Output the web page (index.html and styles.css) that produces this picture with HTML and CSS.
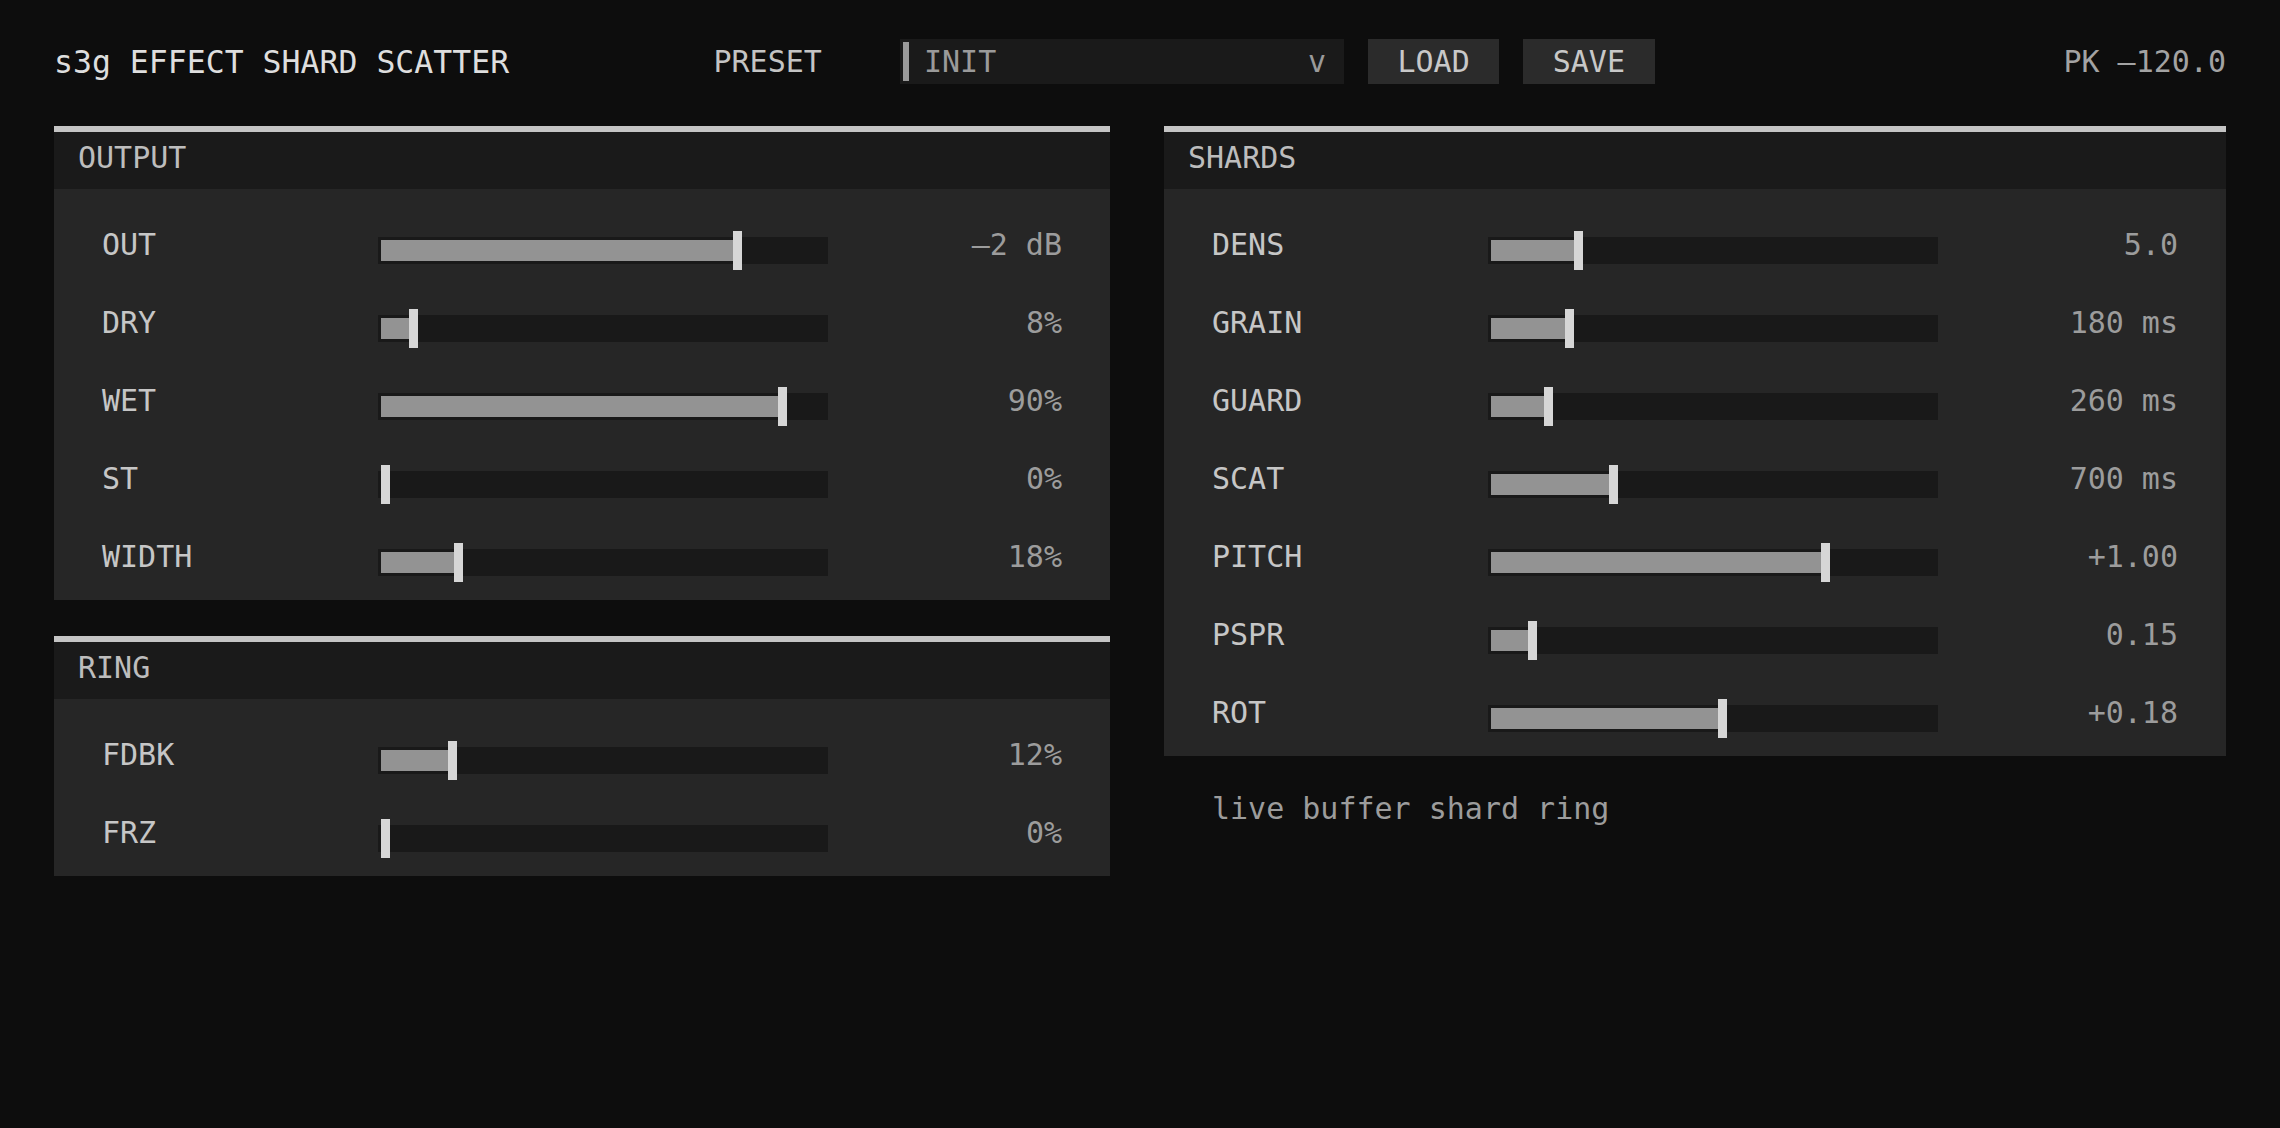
FILE: index.html
```html
<!DOCTYPE html>
<html lang="en">
<head>
<meta charset="utf-8">
<title>s3g EFFECT SHARD SCATTER</title>
<link rel="stylesheet" href="styles.css">
</head>
<body>
<header class="topbar">
  <div class="title">s3g EFFECT SHARD SCATTER</div>
  <div class="preset-label">PRESET</div>
  <div class="select">
    <span class="select-bar"></span>
    <span class="select-text">INIT</span>
    <span class="select-caret">v</span>
  </div>
  <button class="btn">LOAD</button>
  <button class="btn">SAVE</button>
  <div class="peak">PK –120.0</div>
</header>

<main class="columns">
  <div class="col">
    <section class="panel">
      <div class="panel-head">OUTPUT</div>
      <div class="panel-body">
        <div class="row"><span class="label">OUT</span><div class="slider"><div class="track"><div class="fill" style="width:351.7px"><span class="thumb"></span></div></div></div><span class="value">–2 dB</span></div>
        <div class="row"><span class="label">DRY</span><div class="slider"><div class="track"><div class="fill" style="width:28px"><span class="thumb"></span></div></div></div><span class="value">8%</span></div>
        <div class="row"><span class="label">WET</span><div class="slider"><div class="track"><div class="fill" style="width:397px"><span class="thumb"></span></div></div></div><span class="value">90%</span></div>
        <div class="row"><span class="label">ST</span><div class="slider"><div class="track"><div class="fill" style="width:0px"><span class="thumb"></span></div></div></div><span class="value">0%</span></div>
        <div class="row"><span class="label">WIDTH</span><div class="slider"><div class="track"><div class="fill" style="width:73px"><span class="thumb"></span></div></div></div><span class="value">18%</span></div>
      </div>
    </section>
    <section class="panel">
      <div class="panel-head">RING</div>
      <div class="panel-body">
        <div class="row"><span class="label">FDBK</span><div class="slider"><div class="track"><div class="fill" style="width:67px"><span class="thumb"></span></div></div></div><span class="value">12%</span></div>
        <div class="row"><span class="label">FRZ</span><div class="slider"><div class="track"><div class="fill" style="width:0px"><span class="thumb"></span></div></div></div><span class="value">0%</span></div>
      </div>
    </section>
  </div>

  <div class="col">
    <section class="panel">
      <div class="panel-head">SHARDS</div>
      <div class="panel-body">
        <div class="row"><span class="label">DENS</span><div class="slider"><div class="track"><div class="fill" style="width:83px"><span class="thumb"></span></div></div></div><span class="value">5.0</span></div>
        <div class="row"><span class="label">GRAIN</span><div class="slider"><div class="track"><div class="fill" style="width:74px"><span class="thumb"></span></div></div></div><span class="value">180 ms</span></div>
        <div class="row"><span class="label">GUARD</span><div class="slider"><div class="track"><div class="fill" style="width:52.7px"><span class="thumb"></span></div></div></div><span class="value">260 ms</span></div>
        <div class="row"><span class="label">SCAT</span><div class="slider"><div class="track"><div class="fill" style="width:118px"><span class="thumb"></span></div></div></div><span class="value">700 ms</span></div>
        <div class="row"><span class="label">PITCH</span><div class="slider"><div class="track"><div class="fill" style="width:329.7px"><span class="thumb"></span></div></div></div><span class="value">+1.00</span></div>
        <div class="row"><span class="label">PSPR</span><div class="slider"><div class="track"><div class="fill" style="width:37px"><span class="thumb"></span></div></div></div><span class="value">0.15</span></div>
        <div class="row"><span class="label">ROT</span><div class="slider"><div class="track"><div class="fill" style="width:227.3px"><span class="thumb"></span></div></div></div><span class="value">+0.18</span></div>
      </div>
    </section>
    <p class="note">live buffer shard ring</p>
  </div>
</main>
</body>
</html>
```

FILE: styles.css
```css
* {
  box-sizing: border-box;
}

html,
body {
  margin: 0;
  background: #0d0d0d;
}

body {
  padding: 39px 54px;
  font-family: "DejaVu Sans Mono", "Liberation Mono", monospace;
  font-size: 30px;
  color: #c8c8c8;
}

/* ---------- top bar ---------- */
.topbar {
  display: flex;
  align-items: center;
  height: 45px;
}

.title {
  width: 659.5px;
  font-size: 31.5px;
  color: #dedede;
  white-space: nowrap;
}

.preset-label {
  width: 186.5px;
  color: #c4c4c4;
}

.select {
  width: 444px;
  height: 45px;
  display: flex;
  align-items: center;
  padding: 3px 18px 3px 3px;
  margin-right: 24px;
  background: #1a1a1a;
  color: #9a9a9a;
}

.select-bar {
  width: 6px;
  align-self: stretch;
  background: #9a9a9a;
}

.select-text {
  flex: 1;
  margin-left: 15px;
}

.btn {
  height: 45px;
  padding: 0 29.5px;
  margin-right: 24px;
  border: 0;
  background: #2b2b2b;
  color: #c8c8c8;
  font-family: "DejaVu Sans Mono", "Liberation Mono", monospace;
  font-size: 30px;
  line-height: 45px;
}

.peak {
  margin-left: auto;
  color: #a3a3a3;
}

/* ---------- panels ---------- */
.columns {
  display: grid;
  grid-template-columns: 1056px 1062px;
  column-gap: 54px;
  align-items: start;
  margin-top: 42px;
}

.col {
  display: flex;
  flex-direction: column;
  gap: 36px;
}

.panel {
  border-top: 6px solid #c4c4c4;
  background: #262626;
}

.panel-head {
  height: 57px;
  padding: 7.5px 24px 0;
  line-height: 36px;
  background: #1a1a1a;
  color: #bdbdbd;
}

.panel-body {
  display: flex;
  flex-direction: column;
  gap: 24px;
  padding: 37.5px 48px 7.5px;
}

.row {
  display: grid;
  grid-template-columns: 276px 450px 1fr;
  align-items: start;
  height: 54px;
  line-height: 36px;
}

.label {
  color: #c6c6c6;
}

.value {
  text-align: right;
  color: #9c9c9c;
}

.slider {
  height: 39px;
  margin-top: 4.5px;
  padding-top: 6px;
}

.track {
  height: 27px;
  padding: 3px;
  background: #191919;
}

.fill {
  position: relative;
  height: 21px;
  background: #939393;
}

.thumb {
  position: absolute;
  left: 100%;
  top: -9px;
  width: 9px;
  height: 39px;
  background: #d6d6d6;
}

.note {
  margin: 0;
  padding-left: 48px;
  line-height: 33px;
  color: #9c9c9c;
}
```
